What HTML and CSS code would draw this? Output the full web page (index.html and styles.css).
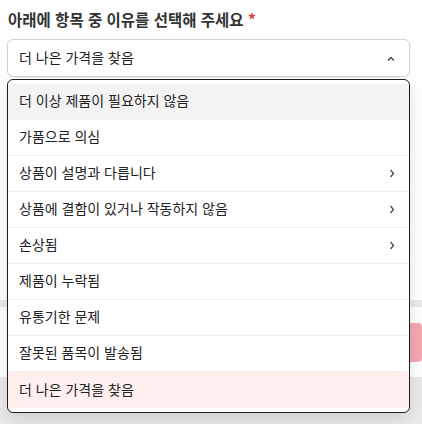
FILE: index.html
```html
<!DOCTYPE html>
<html lang="ko">
<head>
<meta charset="utf-8">
<link rel="stylesheet" href="styles.css">
</head>
<body>
<div class="page">
  <div class="label">아래에 항목 중 이유를 선택해 주세요 <span class="req">*</span></div>
  <div class="field">
    <div class="select">
      <span class="value">더 나은 가격을 찾음</span>
      <svg class="caret-up" width="8" height="5" viewBox="0 0 8 5"><polyline points="1,4.5 4,1.5 7,4.5" fill="none" stroke="#333" stroke-width="1.2"/></svg>
    </div>
    <ul class="menu">
      <li class="item hover">더 이상 제품이 필요하지 않음</li>
      <li class="item">가품으로 의심</li>
      <li class="item">상품이 설명과 다릅니다<svg class="chev" width="6" height="9" viewBox="0 0 6 9"><polyline points="1.5,1 4.5,4.5 1.5,8" fill="none" stroke="#444" stroke-width="1.2"/></svg></li>
      <li class="item">상품에 결함이 있거나 작동하지 않음<svg class="chev" width="6" height="9" viewBox="0 0 6 9"><polyline points="1.5,1 4.5,4.5 1.5,8" fill="none" stroke="#444" stroke-width="1.2"/></svg></li>
      <li class="item">손상됨<svg class="chev" width="6" height="9" viewBox="0 0 6 9"><polyline points="1.5,1 4.5,4.5 1.5,8" fill="none" stroke="#444" stroke-width="1.2"/></svg></li>
      <li class="item">제품이 누락됨</li>
      <li class="item">유통기한 문제</li>
      <li class="item">잘못된 품목이 발송됨</li>
      <li class="item selected">더 나은 가격을 찾음</li>
    </ul>
  </div>
  <div class="spacer"></div>
</div>
<div class="divider"></div>
<div class="actions"><div class="btn"></div></div>
<div class="footer"></div>
</body>
</html>
```

FILE: styles.css
```css
* { box-sizing: border-box; }
html, body { margin: 0; padding: 0; background: #fff; }
body {
  font-family: "Noto Sans CJK KR", "Noto Sans", sans-serif;
  color: #222;
  width: 422px;
  height: 424px;
  overflow: hidden;
}
.page { padding: 9px 12px 0 7px; }
.label {
  font-size: 15.5px;
  font-weight: 700;
  line-height: 20px;
  color: #333;
  padding-left: 1px;
}
.req { color: #e53935; }
.field { position: relative; margin-top: 10px; }
.select {
  height: 38px;
  border: 1px solid #d2d2d2;
  border-radius: 6px;
  display: flex;
  align-items: center;
  justify-content: space-between;
  padding: 0 14px 2px 11px;
  font-size: 14px;
  background: #fff;
  box-shadow: 0 1px 3px rgba(0,0,0,0.05);
}
.value { line-height: 18px; }
.caret-up { display: block; margin-top: 2px; }
.menu {
  position: absolute;
  top: 40px;
  left: 0;
  right: 0;
  margin: 0;
  padding: 4px 0;
  list-style: none;
  background: #fff;
  border: 1px solid #1e1e1e;
  border-radius: 6px;
  box-shadow: 0 6px 18px rgba(0,0,0,0.13);
  z-index: 5;
  overflow: hidden;
}
.item {
  height: 36px;
  display: flex;
  align-items: center;
  justify-content: space-between;
  padding: 0 14px 3px 11px;
  font-size: 14px;
  line-height: 18px;
  border-bottom: 1px solid #efefef;
  color: #222;
}
.item:last-child { border-bottom: none; }
.item.hover { background: #f3f3f3; border-bottom-color: #f3f3f3; }
.item.selected { background: #fff0ef; }
.chev { display: block; margin-top: 3px; }
.spacer { height: 223px; }
.divider { height: 7px; background: #ebebeb; }
.actions { padding: 16px 0 15px 7px; }
.btn { height: 39px; background: #f5a9b2; border-radius: 4px; }
.footer { height: 60px; background: #ebebeb; }
```
